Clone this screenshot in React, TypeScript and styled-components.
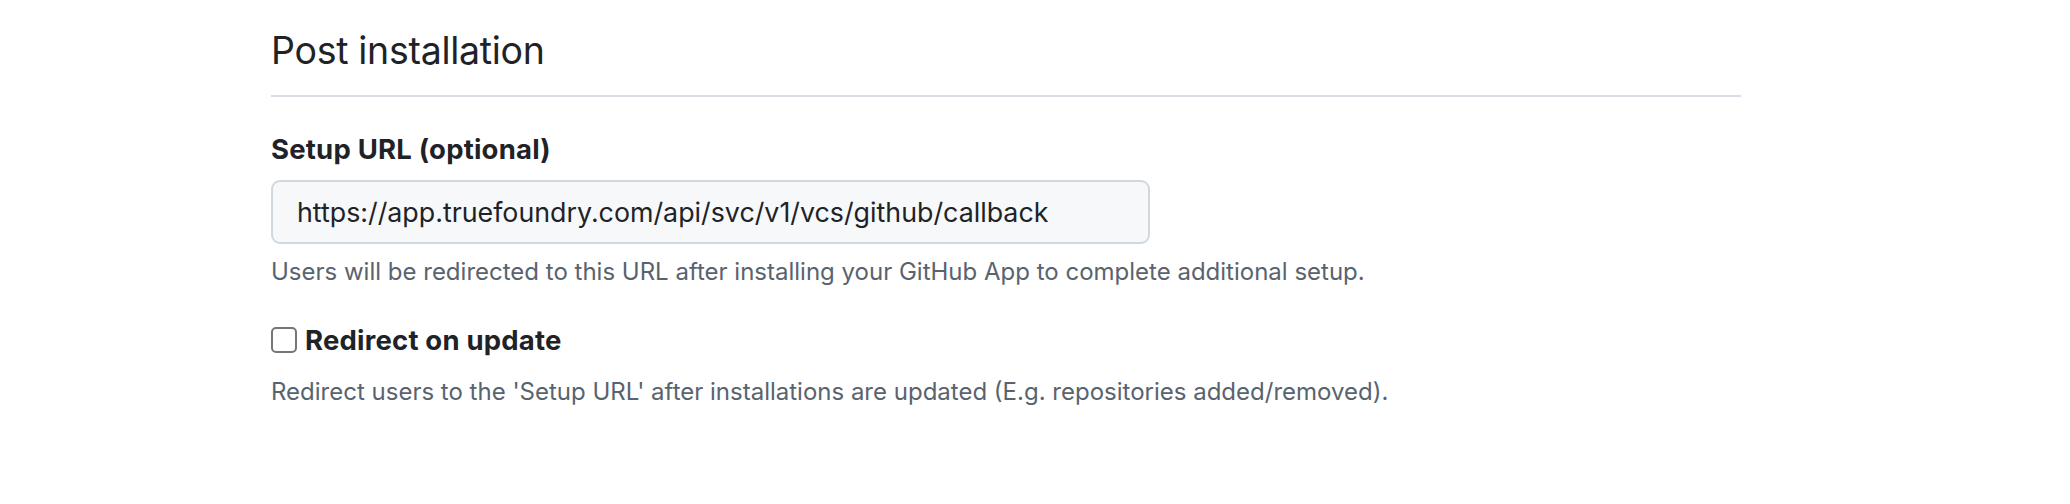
import React, { useState } from 'react';
import styled, { createGlobalStyle } from 'styled-components';

const GlobalStyle = createGlobalStyle`
  html, body {
    margin: 0;
    padding: 0;
    background: #ffffff;
  }
  body {
    font-family: Inter, "Noto Sans", "Liberation Sans", sans-serif;
    color: #1f2328;
  }
`;

const Page = styled.div`
  padding: 0 329px 0 271px;
`;

const Subhead = styled.div`
  display: flex;
  align-items: center;
  padding-top: 24px;
  padding-bottom: 17px;
  border-bottom: 2px solid #d8dee4;
`;

const SubheadHeading = styled.h2`
  margin: 0;
  font-size: 37.5px;
  font-weight: 400;
  line-height: 54px;
  letter-spacing: -0.3px;
  color: #1f2328;
`;

const FormGroup = styled.div<{ top: number }>`
  margin-top: ${({ top }) => top}px;
`;

const Label = styled.label`
  display: block;
  font-size: 27.5px;
  font-weight: 700;
  line-height: 30px;
  letter-spacing: 0.2px;
  color: #1f2328;
`;

const TextInput = styled.input`
  box-sizing: border-box;
  display: block;
  width: 879px;
  height: 64px;
  margin-top: 16px;
  padding: 0 24px;
  font-family: inherit;
  font-size: 26.8px;
  color: #1f2328;
  background: #f6f8fa;
  border: 2px solid #d1d9e0;
  border-radius: 9px;
  outline: none;
`;

const Note = styled.p<{ top: number }>`
  margin: ${({ top }) => top}px 0 0;
  font-size: 24px;
  line-height: 30px;
  color: #59636e;
`;

const CheckRow = styled.label`
  display: flex;
  align-items: center;
  gap: 8px;
  cursor: pointer;
`;

const Box = styled.input`
  appearance: none;
  box-sizing: border-box;
  width: 26px;
  height: 26px;
  margin: 0;
  border: 2px solid #767676;
  border-radius: 5px;
  background: #ffffff;
  cursor: pointer;

  &:checked {
    background: #0969da;
    border-color: #0969da;
  }
`;

const CheckText = styled.span`
  font-size: 27.5px;
  font-weight: 700;
  line-height: 30px;
  letter-spacing: 0.2px;
  color: #1f2328;
`;

export default function App() {
  const [url, setUrl] = useState(
    'https://app.truefoundry.com/api/svc/v1/vcs/github/callback'
  );
  const [redirect, setRedirect] = useState(false);

  return (
    <Page>
      <GlobalStyle />
      <Subhead>
        <SubheadHeading>Post installation</SubheadHeading>
      </Subhead>

      <FormGroup top={37}>
        <Label htmlFor="setup-url">Setup URL (optional)</Label>
        <TextInput
          id="setup-url"
          value={url}
          onChange={e => setUrl(e.target.value)}
        />
        <Note top={13}>
          Users will be redirected to this URL after installing your GitHub App
          to complete additional setup.
        </Note>
      </FormGroup>

      <FormGroup top={38}>
        <CheckRow>
          <Box
            type="checkbox"
            checked={redirect}
            onChange={e => setRedirect(e.target.checked)}
          />
          <CheckText>Redirect on update</CheckText>
        </CheckRow>
        <Note top={22}>
          Redirect users to the 'Setup URL' after installations are updated
          (E.g. repositories added/removed).
        </Note>
      </FormGroup>
    </Page>
  );
}
